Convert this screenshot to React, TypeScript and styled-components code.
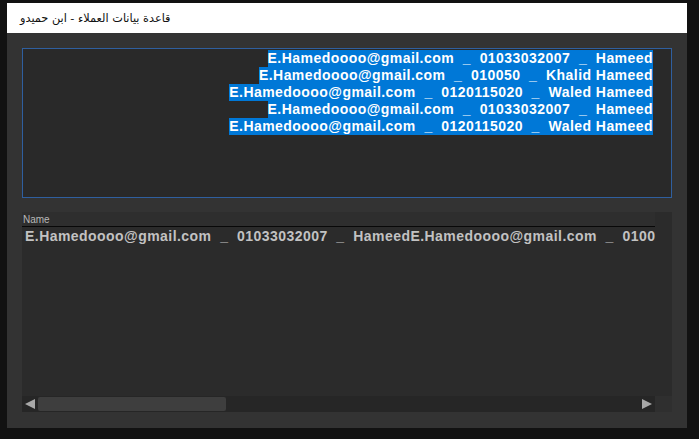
import React from 'react';
import styled, { createGlobalStyle } from 'styled-components';

const GlobalStyle = createGlobalStyle`
  html, body {
    margin: 0;
    padding: 0;
    background: #121212;
    overflow: hidden;
  }
  body {
    font-family: "Liberation Sans", Arial, sans-serif;
  }
`;

const Screen = styled.div`
  width: 699px;
  height: 439px;
  padding: 3px 12px 11px 7px;
  box-sizing: border-box;
  background: #121212;
`;

const Window = styled.div`
  display: flex;
  flex-direction: column;
  height: 100%;
  background: #333333;
`;

const TitleBar = styled.div`
  height: 30px;
  flex: none;
  display: flex;
  align-items: center;
  padding-left: 13px;
  background: #ffffff;
`;

const Title = styled.div`
  direction: rtl;
  font-family: "DejaVu Sans", sans-serif;
  font-size: 11.3px;
  color: #111111;
`;

const Body = styled.div`
  flex: 1;
  display: flex;
  flex-direction: column;
  gap: 14px;
  padding: 15px 15px 16px 15px;
`;

const TextBox = styled.div`
  height: 150px;
  box-sizing: border-box;
  border: 1px solid #2f5f9f;
  background: #292929;
  padding: 1px 18px 0 0;
  display: flex;
  flex-direction: column;
  align-items: flex-end;
`;

const SelectedLine = styled.span`
  display: inline-block;
  white-space: pre;
  line-height: 17px;
  height: 17px;
  font-size: 14px;
  font-weight: bold;
  letter-spacing: 0.45px;
  color: #ffffff;
  background: #0078d7;
`;

const ListBox = styled.div`
  flex: 1;
  display: flex;
  flex-direction: column;
  background: #2b2b2b;
  min-height: 0;
`;

const Header = styled.div`
  height: 14px;
  margin-right: 17px;
  padding-left: 1px;
  border-bottom: 1px solid #080808;
  background: #2e2e2e;
  font-size: 10px;
  line-height: 15px;
  color: #b8b8b8;
`;

const Rows = styled.div`
  flex: 1;
  margin-right: 17px;
  overflow: hidden;
`;

const Row = styled.div`
  white-space: pre;
  padding: 1px 0 0 3px;
  line-height: 17px;
  font-size: 14px;
  font-weight: bold;
  letter-spacing: 0.45px;
  color: #c2c2c2;
`;

const ScrollBar = styled.div`
  height: 16px;
  flex: none;
  display: flex;
  align-items: center;
  background: #262626;
`;

const Arrow = styled.div`
  width: 16px;
  height: 16px;
  display: flex;
  align-items: center;
  justify-content: center;
  svg {
    width: 12px;
    height: 12px;
    fill: #a8a8a8;
  }
`;

const Track = styled.div`
  flex: 1;
  height: 100%;
  display: flex;
  align-items: center;
`;

const Thumb = styled.div`
  width: 188px;
  height: 14px;
  border-radius: 2px;
  background: #3e3e3e;
`;

const Corner = styled.div`
  width: 17px;
  height: 16px;
  background: #2f2f2f;
`;

const lines = [
  'E.Hamedoooo@gmail.com  _  01033032007  _  Hameed',
  'E.Hamedoooo@gmail.com  _  010050  _  Khalid Hameed',
  'E.Hamedoooo@gmail.com  _  0120115020  _  Waled Hameed',
  'E.Hamedoooo@gmail.com  _  01033032007  _  Hameed',
  'E.Hamedoooo@gmail.com  _  0120115020  _  Waled Hameed',
];

const App: React.FC = () => {
  return (
    <>
      <GlobalStyle />
      <Screen>
        <Window>
          <TitleBar>
            <Title>قاعدة بيانات العملاء - ابن حميدو</Title>
          </TitleBar>
          <Body>
            <TextBox>
              {lines.map((line, i) => (
                <SelectedLine key={i}>{line}</SelectedLine>
              ))}
            </TextBox>
            <ListBox>
              <Header>Name</Header>
              <Rows>
                <Row>{lines.join('')}</Row>
              </Rows>
              <ScrollBar>
                <Arrow>
                  <svg viewBox="0 0 12 12">
                    <polygon points="1,6 11,1 11,11" />
                  </svg>
                </Arrow>
                <Track>
                  <Thumb />
                </Track>
                <Arrow>
                  <svg viewBox="0 0 12 12">
                    <polygon points="11,6 1,1 1,11" />
                  </svg>
                </Arrow>
                <Corner />
              </ScrollBar>
            </ListBox>
          </Body>
        </Window>
      </Screen>
    </>
  );
};

export default App;
